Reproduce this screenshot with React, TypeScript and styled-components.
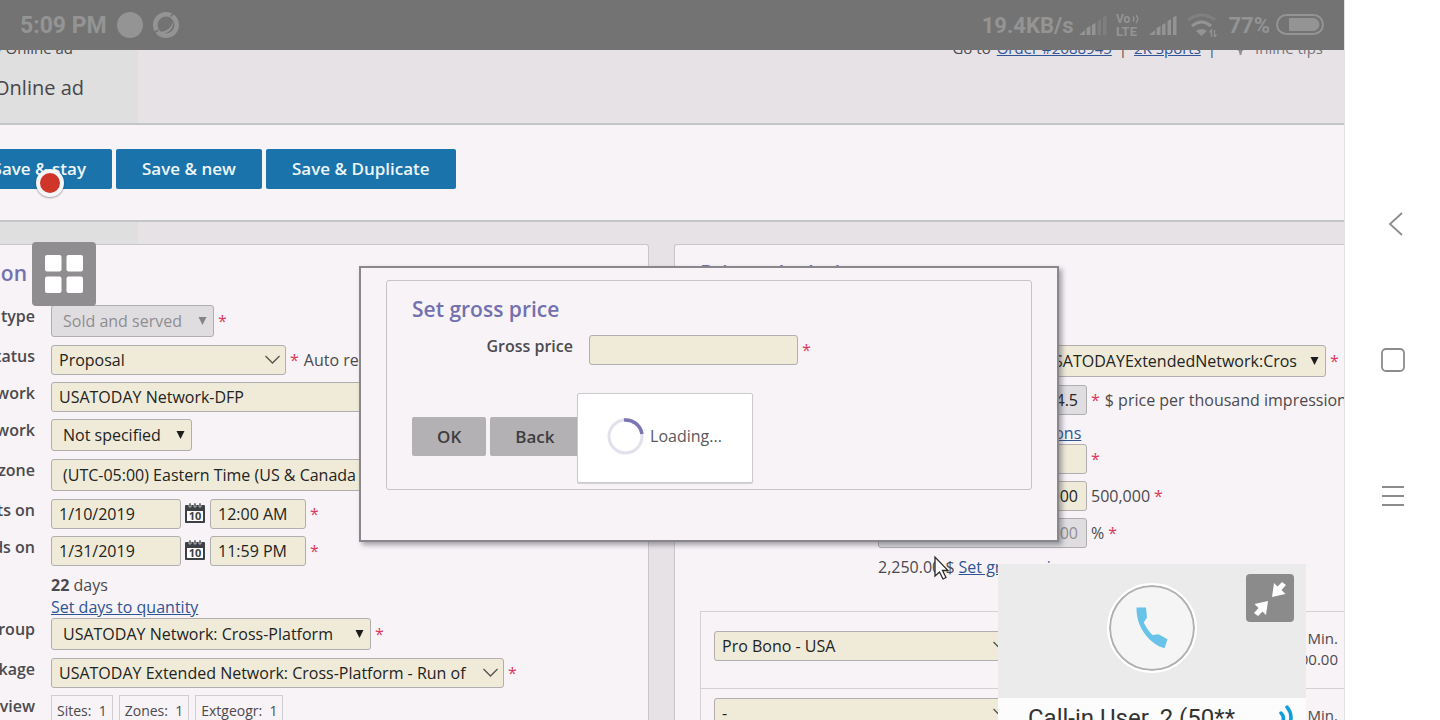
import React from 'react';
import styled, { createGlobalStyle } from 'styled-components';

const Global = createGlobalStyle`
  *, *::before, *::after { box-sizing: border-box; }
  body { margin: 0; background: #fff; font-family: 'Open Sans', 'Noto Sans', sans-serif; font-size: 16px; line-height: 22px; color: #4c4a4e; }
  button, input, select { font: inherit; margin: 0; }
`;

const Device = styled.div`
  display: flex;
  height: 100vh;
  overflow: hidden;
`;

const Shared = styled.div`
  position: relative;
  flex: 1;
  min-width: 0;
  overflow: hidden;
  background: #e7e2e6;
  white-space: nowrap;
`;

/* phone status bar */
const StatusBar = styled.div`
  position: absolute;
  inset: 0 0 auto 0;
  z-index: 5;
  height: 50px;
  padding: 0 20px;
  display: flex;
  align-items: center;
  justify-content: space-between;
  background: #737373;
  color: #949494;
  font: 700 22px/32px Roboto, sans-serif;
`;

const StatusGroup = styled.div<{ $gap: number }>`
  display: flex;
  align-items: center;
  gap: ${p => p.$gap}px;
  svg { display: block; }
  span { padding-top: 2px; }
`;

const Clock = styled.span`
  font-size: 23px;
`;

/* page header */
const Header = styled.header`
  display: flex;
  justify-content: space-between;
  align-items: flex-start;
  height: 125px;
  padding-top: 37px;
  border-bottom: 2px solid #c4c5c7;
`;

const HeaderTitle = styled.div`
  width: 138px;
  height: 86px;
  background: #dedfde;
`;

const Crumb = styled.div`
  display: flex;
  justify-content: flex-end;
  width: 73px;
  font-size: 15px;
`;

const PageTitle = styled.h1`
  display: flex;
  justify-content: flex-end;
  width: 84px;
  margin: 15px 0 0;
  font-size: 20px;
  font-weight: 400;
  line-height: 28px;
  color: #48464a;
`;

const HeaderLinks = styled.nav`
  display: flex;
  gap: 6px;
  padding-right: 21px;
  font-size: 15px;
`;

const Divider = styled.span`
  padding: 0 1px;
`;

const Tips = styled.span`
  display: flex;
  align-items: center;
  gap: 10px;
  margin-left: 13px;
  color: #77757a;
`;

const Link = styled.a`
  color: #2f5596;
  text-decoration: underline;
`;

const Toolbar = styled.div`
  display: flex;
  align-items: flex-start;
  gap: 4px;
  height: 97px;
  padding-top: 24px;
  background: #f7f3f7;
  border-bottom: 2px solid #c4c5c7;
`;

const ActionButton = styled.button`
  height: 40px;
  padding: 0 26px;
  border: 0;
  border-radius: 2px;
  background: #1a74ab;
  color: #eef6fb;
  font-size: 17px;
  font-weight: 600;
`;

const StayClip = styled.div`
  display: flex;
  justify-content: flex-end;
  width: 112px;
`;

const Strip = styled.div`
  width: 138px;
  height: 22px;
  background: #dedfde;
`;

/* form panels */
const Columns = styled.main`
  display: grid;
  grid-template-columns: minmax(0, 649px) minmax(0, 1fr);
  column-gap: 25px;
`;

const Panel = styled.section<{ $side: 'left' | 'right' }>`
  min-height: 500px;
  padding: 16px 0 0 ${p => (p.$side === 'right' ? 25 : 0)}px;
  overflow: hidden;
  background: #f7f3f7;
  border-top: 1px solid #c8c7ca;
  border-left: ${p => (p.$side === 'right' ? '1px solid #c8c7ca' : '0')};
  border-right: ${p => (p.$side === 'left' ? '1px solid #c8c7ca' : '0')};
  border-radius: ${p => (p.$side === 'right' ? '3px 0 0 0' : '0 3px 0 0')};
`;

const Heading = styled.h2<{ $clip?: boolean }>`
  display: flex;
  justify-content: ${p => (p.$clip ? 'flex-end' : 'flex-start')};
  width: ${p => (p.$clip ? '27px' : 'auto')};
  margin: 0;
  font-size: 21px;
  font-weight: 600;
  line-height: 24px;
  color: #7371ae;
`;

const Rows = styled.div`
  display: flex;
  flex-direction: column;
  gap: 8px;
  padding-top: 20px;
`;

const RightRows = styled(Rows)`
  padding-top: 60px;
`;

const Row = styled.div<{ $label: number; $text?: boolean }>`
  display: grid;
  grid-template-columns: ${p => p.$label}px minmax(0, 1fr);
  column-gap: 16px;
  padding-top: ${p => (p.$text ? 1 : 0)}px;
`;

const Label = styled.label`
  display: flex;
  justify-content: flex-end;
  font-weight: 600;
`;

const Fields = styled.div`
  display: flex;
  align-items: center;
  gap: 4px;
`;

const Stack = styled.div`
  display: flex;
  flex-direction: column;
  align-items: flex-start;
  > span, > a { line-height: 22px; }
`;

const Star = styled.span`
  padding-right: 1px;
  color: #e0375a;
`;

const Box = styled.input<{ $w: number; $off?: boolean; $right?: boolean }>`
  width: ${p => p.$w}px;
  height: 30px;
  margin-bottom: -1px;
  padding: 0 8px 0 7px;
  border: 1px solid #b1aeaf;
  border-radius: 3px;
  background: ${p => (p.$off ? '#dfdde0' : '#efebd8')};
  color: ${p => (p.disabled ? '#8f8d90' : '#232323')};
  text-align: ${p => (p.$right ? 'right' : 'left')};
`;

const PickWrap = styled.span<{ $w: number }>`
  display: grid;
  align-items: center;
  flex: none;
  width: ${p => p.$w}px;
  > * { grid-area: 1 / 1; }
  > svg { justify-self: end; margin-right: 6px; pointer-events: none; }
`;

const Pick = styled.select<{ $tall: boolean; $end?: boolean }>`
  appearance: none;
  width: 100%;
  height: ${p => (p.$tall ? 32 : 30)}px;
  margin-bottom: ${p => (p.$tall ? 0 : -1)}px;
  padding: 0 28px 0 ${p => (p.$tall ? 11 : 7)}px;
  border: 1px solid #b1aeaf;
  border-radius: 3px;
  background: ${p => (p.disabled ? '#dfdde0' : '#efebd8')};
  color: ${p => (p.disabled ? '#8f8d90' : '#232323')};
  opacity: 1;
  text-align-last: ${p => (p.$end ? 'right' : 'left')};
`;

function Chevron() {
  return (
    <svg width="15" height="9" viewBox="0 0 15 9" fill="none" stroke="#55534f" strokeWidth="1.3">
      <path d="M.5 1l7 7 7-7" />
    </svg>
  );
}

function Triangle({ color = '#1c1c1c' }: { color?: string }) {
  return (
    <svg width="10" height="8" viewBox="0 0 10 8" fill={color}>
      <path d="M.5 0h8l-4 8z" />
    </svg>
  );
}

type SelectProps = { id?: string; w: number; text: string; tall?: boolean; disabled?: boolean; end?: boolean; name?: string };

function Select({ id, w, text, tall = false, disabled, end, name }: SelectProps) {
  return (
    <PickWrap $w={w}>
      <Pick id={id} aria-label={name} $tall={tall} $end={end} disabled={disabled}>
        <option>{text}</option>
      </Pick>
      {tall ? <Triangle color={disabled ? '#858386' : undefined} /> : <Chevron />}
    </PickWrap>
  );
}

const IconButton = styled.button`
  display: block;
  width: 21px;
  height: 22px;
  padding: 0;
  border: 0;
  background: none;
  svg { display: block; }
`;

function CalendarButton({ name }: { name: string }) {
  return (
    <IconButton aria-label={name}>
      <svg width="20" height="21" viewBox="0 0 20 21">
        <path d="M1 2h18a1 1 0 0 1 1 1v16a1 1 0 0 1-1 1H1a1 1 0 0 1-1-1V3a1 1 0 0 1 1-1z" fill="#3d4145" />
        <path d="M2 8h16v10H2z" fill="#fff" />
        <path d="M4 0h2v4H4zM9 0h2v4H9zM14 0h2v4h-2z" fill="#3d4145" stroke="#f7f3f7" strokeWidth=".6" />
        <text x="10" y="17" textAnchor="middle" fontFamily="Open Sans" fontWeight="700" fontSize="11" fill="#3d4145">10</text>
      </svg>
    </IconButton>
  );
}

const Chips = styled.div`
  display: flex;
  gap: 6px;
`;

const Chip = styled.span`
  height: 34px;
  padding: 4px 5px;
  border: 1px solid #cfced2;
  font-size: 14px;
  white-space: pre;
`;

const Rates = styled.table`
  width: 100%;
  margin-top: 33px;
  border-collapse: collapse;
  border: 1px solid #d3d1d5;
  border-right: 0;
  font-size: 15px;
  line-height: 21px;
  tr { height: 77px; border-top: 1px solid #d3d1d5; }
  td { vertical-align: top; padding: 16px 6px 0 0; text-align: right; }
`;

const RateCell = styled.th<{ $top: number }>`
  padding: ${p => p.$top}px 0 0 13px;
  vertical-align: top;
  text-align: left;
  font-size: 16px;
  font-weight: 400;
`;

/* price dialog */
const Dialog = styled.div`
  position: absolute;
  top: 266px;
  left: 359px;
  z-index: 2;
  width: 700px;
  padding: 12px 25px 50px;
  border: 2px solid #89878b;
  background: #f7f3f7;
  box-shadow: 3px 3px 5px rgba(60, 60, 70, 0.45);
`;

const Group = styled.div`
  height: 210px;
  padding: 16px 25px;
  border: 1px solid #c5c4c8;
  border-radius: 3px;
`;

const DialogRow = styled(Row)`
  padding-top: 14px;
`;

const DialogButtons = styled.div`
  display: flex;
  gap: 4px;
  padding-top: 53px;
`;

const GreyButton = styled(ActionButton)`
  height: 39px;
  padding: 0 25px;
  background: #b3b1b3;
  color: #3f3d40;
`;

const Loading = styled.div`
  position: absolute;
  top: 393px;
  left: 577px;
  z-index: 3;
  display: flex;
  align-items: center;
  justify-content: center;
  gap: 6px;
  width: 176px;
  height: 90px;
  padding: 0 1px 4px 0;
  border: 1px solid #cbcace;
  border-radius: 2px;
  background: #fff;
  box-shadow: 0 1px 1px rgba(0, 0, 0, 0.15);
  color: #5a585c;
`;

/* floating meeting controls */
const RecordDot = styled.span`
  position: absolute;
  top: 169px;
  left: 36px;
  z-index: 2;
  width: 28px;
  height: 28px;
  border: 4px solid #f4f6f8;
  border-radius: 50%;
  background: #cf3529;
  box-shadow: 0 1px 2px rgba(0, 0, 0, 0.35);
`;

const GridButton = styled.button`
  position: absolute;
  top: 242px;
  left: 32px;
  z-index: 2;
  display: grid;
  place-content: center;
  width: 64px;
  height: 64px;
  padding: 0;
  border: 0;
  border-radius: 4px;
  background: #8f8d90;
`;

const Pointer = styled.svg`
  position: absolute;
  top: 555px;
  left: 933px;
  z-index: 3;
`;

const CallCard = styled.aside`
  position: absolute;
  top: 564px;
  right: 38px;
  z-index: 4;
  width: 308px;
  background: #fcfcfc;
`;

const CallView = styled.div`
  display: flex;
  justify-content: center;
  height: 134px;
  padding-top: 19px;
  background: #ebebeb;
`;

const Avatar = styled.div`
  display: grid;
  place-content: center;
  width: 90px;
  height: 90px;
  border: 2px solid #fff;
  border-radius: 50%;
  background: #f5f5f5;
  box-shadow: inset 0 0 0 2px #b0b0b0;
`;

const ShrinkButton = styled.button`
  position: absolute;
  top: 10px;
  right: 12px;
  width: 48px;
  height: 48px;
  padding: 0;
  border: 0;
  border-radius: 4px;
  background: #8b8b8b;
`;

const Caller = styled.div`
  display: flex;
  align-items: flex-start;
  justify-content: space-between;
  height: 46px;
  padding: 5px 10px 0 30px;
  color: #333;
  font: 400 24px/30px Roboto, sans-serif;
`;

/* phone navigation rail */
const Rail = styled.nav`
  display: flex;
  flex-direction: column;
  align-items: center;
  gap: 108px;
  width: 96px;
  padding-top: 210px;
  border-left: 1px solid #e2e2e2;
  background: #fff;
`;

const RailButton = styled.button`
  display: grid;
  place-content: center;
  width: 28px;
  height: 28px;
  padding: 0;
  border: 0;
  background: none;
`;

function Bars({ dim }: { dim?: boolean }) {
  return (
    <svg width="28" height="20" viewBox="0 0 28 20" fill="#949494">
      <path d="M0 20l6-5v5z" />
      <path d="M7.500 13l4-2v9h-4z" />
      <path d="M13 10l3.500-2v12H13z" />
      <path d="M18.500 6l3.500-2v16h-3.500z" fill={dim ? '#7f7f7f' : undefined} />
      <path d="M24 2.500L27.500.5V20H24z" fill={dim ? '#7f7f7f' : undefined} />
    </svg>
  );
}

function Status() {
  return (
    <StatusBar>
      <StatusGroup $gap={10}>
        <Clock>5:09 PM</Clock>
        <svg width="26" height="26" viewBox="0 0 26 26" fill="#949494"><circle cx="13" cy="13" r="13" /></svg>
        <svg width="26" height="26" viewBox="0 0 26 26" fill="none">
          <circle cx="13" cy="13" r="10.700" stroke="#949494" strokeWidth="4.600" />
          <path d="M20 6C21 13 15 20 6 20C13 24 22 18 20 6z" fill="#949494" />
          <path d="M17.500 4.500l3-3M1.500 20.500l4-2.500" stroke="#737373" strokeWidth="1.500" />
        </svg>
      </StatusGroup>
      <StatusGroup $gap={6}>
        <span>19.4KB/s</span>
        <Bars dim />
        <svg width="30" height="24" viewBox="0 0 30 24" fill="#949494" fontFamily="Roboto" fontWeight="700">
          <text x="3" y="10" fontSize="12">Vo</text>
          <path d="M20 3.500q2 2.500 0 5M23 2q3.500 4 0 8" fill="none" stroke="#949494" strokeWidth="1.300" />
          <text x="3" y="23" fontSize="13">LTE</text>
        </svg>
        <Bars />
        <svg width="39" height="24" viewBox="0 0 39 24" fill="none" strokeWidth="3">
          <path d="M5 7q14-10 27 0" stroke="#808080" />
          <path d="M9 13q9.500-8 19 0" stroke="#949494" />
          <path d="M13 18q5.500-4 11 0l-5.500 5z" fill="#949494" />
          <path d="M28.500 24v-7l-2 2.500M31.500 17v7l2-2.500" stroke="#949494" strokeWidth="1.300" />
        </svg>
        <span>77%</span>
        <svg width="48" height="22" viewBox="0 0 48 22">
          <rect x="1" y="1" width="46" height="19" rx="9.500" fill="none" stroke="#949494" strokeWidth="2" />
          <path d="M14 4h23a6.500 6.500 0 0 1 0 13H14q-1 0-1-1V5q0-1 1-1z" fill="#949494" />
        </svg>
      </StatusGroup>
    </StatusBar>
  );
}

function LeftPanel() {
  return (
    <Panel $side="left">
      <Heading $clip>Position</Heading>
      <Rows>
        <Row $label={35}>
          <Label htmlFor="type">Position type</Label>
          <Fields><Select id="type" w={163} text="Sold and served" tall disabled /><Star>*</Star></Fields>
        </Row>
        <Row $label={35}>
          <Label htmlFor="status">Status</Label>
          <Fields><Select id="status" w={235} text="Proposal" /><Star>*</Star><span>Auto reserve</span></Fields>
        </Row>
        <Row $label={35}>
          <Label htmlFor="network">Network</Label>
          <Fields><Select id="network" w={450} text="USATODAY Network-DFP" /></Fields>
        </Row>
        <Row $label={35}>
          <Label htmlFor="subnetwork">Subnetwork</Label>
          <Fields><Select id="subnetwork" w={141} text="Not specified" tall /></Fields>
        </Row>
        <Row $label={35}>
          <Label htmlFor="zone">Time zone</Label>
          <Fields><Select id="zone" w={360} text="(UTC-05:00) Eastern Time (US & Canada" tall /></Fields>
        </Row>
        <Row $label={35}>
          <Label htmlFor="starts">Starts on</Label>
          <Fields>
            <Box id="starts" $w={130} defaultValue="1/10/2019" />
            <CalendarButton name="Pick start date" />
            <Box aria-label="Start time" $w={96} defaultValue="12:00 AM" />
            <Star>*</Star>
          </Fields>
        </Row>
        <Row $label={35}>
          <Label htmlFor="ends">Ends on</Label>
          <Fields>
            <Box id="ends" $w={130} defaultValue="1/31/2019" />
            <CalendarButton name="Pick end date" />
            <Box aria-label="End time" $w={96} defaultValue="11:59 PM" />
            <Star>*</Star>
          </Fields>
        </Row>
        <Row $label={35} $text>
          <span />
          <Stack><span><b>22</b> days</span></Stack>
          <span />
          <Stack><Link href="#quantity">Set days to quantity</Link></Stack>
          <Label htmlFor="group">Group</Label>
          <Fields><Select id="group" w={320} text="USATODAY Network: Cross-Platform" tall /><Star>*</Star></Fields>
        </Row>
        <Row $label={35}>
          <Label htmlFor="package">Package</Label>
          <Fields><Select id="package" w={453} text="USATODAY Extended Network: Cross-Platform - Run of" /><Star>*</Star></Fields>
        </Row>
        <Row $label={35}>
          <Label as="span">Preview</Label>
          <Chips><Chip>{'Sites:  1'}</Chip><Chip>{'Zones:  1'}</Chip><Chip>{'Extgeogr:  1'}</Chip></Chips>
        </Row>
      </Rows>
    </Panel>
  );
}

function RightPanel() {
  return (
    <Panel $side="right">
      <Heading>Price calculation</Heading>
      <RightRows>
        <Row $label={162}>
          <span />
          <Fields><Select name="Rate card" w={448} text="USATODAYExtendedNetwork:Cros" tall end /><Star>*</Star><span>- Rate</span></Fields>
        </Row>
        <Row $label={162}>
          <span />
          <Fields><Box aria-label="Price" $w={209} $right $off defaultValue="4.5" /><Star>*</Star><span>$ price per thousand impressions</span></Fields>
        </Row>
        <Row $label={162}>
          <span />
          <Fields><Link href="#impressions">Calculate from impressions</Link></Fields>
          <span />
          <Fields><Box aria-label="Impressions" $w={209} $right /><Star>*</Star></Fields>
        </Row>
        <Row $label={162}>
          <span />
          <Fields><Box aria-label="Quantity" $w={209} $right defaultValue="500,000" /><span>500,000</span><Star>*</Star></Fields>
        </Row>
        <Row $label={162}>
          <span />
          <Fields><Box aria-label="Discount" $w={209} $right $off disabled defaultValue="0.0000" /><span>%</span><Star>*</Star></Fields>
        </Row>
        <Row $label={162} $text>
          <span />
          <Fields><span>2,250.00 $</span><Link href="#gross">Set gross price</Link></Fields>
        </Row>
      </RightRows>
      <Rates>
        <tbody>
          <tr>
            <RateCell scope="row" $top={19}><Select name="Discount type" w={300} text="Pro Bono - USA" /></RateCell>
            <td>Min.<br />100.00</td>
          </tr>
          <tr>
            <RateCell scope="row" $top={9}><Select name="Second discount type" w={300} text="-" /></RateCell>
            <td>Min.</td>
          </tr>
        </tbody>
      </Rates>
    </Panel>
  );
}

export default function App() {
  return (
    <Device>
      <Global />
      <Shared>
        <Status />
        <Header>
          <HeaderTitle>
            <Crumb>New Online ad</Crumb>
            <PageTitle>Online ad</PageTitle>
          </HeaderTitle>
          <HeaderLinks>
            <span>Go to</span>
            <Link href="#order">Order #2688945</Link>
            <Divider>|</Divider>
            <Link href="#client">2K Sports</Link>
            <Divider>|</Divider>
            <Tips>
              <svg width="9" height="14" viewBox="0 0 9 14" fill="none" stroke="#77757a" strokeWidth="1.300">
                <path d="M2.500 9C0 6 .5 1 4.500 1S9 6 6.500 9zM3 11h3M3.500 13h2" />
              </svg>
              Inline tips
            </Tips>
          </HeaderLinks>
        </Header>
        <Toolbar>
          <StayClip><ActionButton>Save &amp; stay</ActionButton></StayClip>
          <ActionButton>Save &amp; new</ActionButton>
          <ActionButton>Save &amp; Duplicate</ActionButton>
        </Toolbar>
        <Strip />
        <Columns>
          <LeftPanel />
          <RightPanel />
        </Columns>

        <Dialog role="dialog" aria-label="Set gross price">
          <Group>
            <Heading>Set gross price</Heading>
            <DialogRow $label={161}>
              <Label htmlFor="gross">Gross price</Label>
              <Fields><Box id="gross" $w={209} /><Star>*</Star></Fields>
            </DialogRow>
            <DialogButtons>
              <GreyButton>OK</GreyButton>
              <GreyButton>Back</GreyButton>
            </DialogButtons>
          </Group>
        </Dialog>
        <Loading role="status">
          <svg width="37" height="37" viewBox="0 0 37 37" fill="none" strokeWidth="3.500">
            <circle cx="18.500" cy="18.500" r="16.500" stroke="#e2e1ec" strokeWidth="3" />
            <path d="M17 2A16.500 16.500 0 0 1 35 16" stroke="#7a75b3" />
          </svg>
          Loading...
        </Loading>
        <Pointer width="18" height="26" viewBox="0 0 18 26">
          <path d="M2 2v19l4.500-4 3.500 7 3-1.500-3.500-7H15z" fill="#fff" stroke="#2b2b2b" strokeWidth="1.300" />
        </Pointer>
        <RecordDot />
        <GridButton aria-label="Views">
          <svg width="38" height="38" viewBox="0 0 38 38" fill="#fff">
            <rect width="16.500" height="16.500" rx="2" /><rect x="21.500" width="16.500" height="16.500" rx="2" />
            <rect y="21.500" width="16.500" height="16.500" rx="2" /><rect x="21.500" y="21.500" width="16.500" height="16.500" rx="2" />
          </svg>
        </GridButton>
        <CallCard>
          <CallView>
            <Avatar>
              <svg width="32" height="42" viewBox="0 0 32 42" fill="#67c3e8">
                <path d="M.5.500h9.500l1 10-3.300 5q4 8 8.800 12.500l6-.700 9 5-3 9C14 37 0 21 .5.500z" />
              </svg>
            </Avatar>
          </CallView>
          <ShrinkButton aria-label="Shrink">
            <svg width="48" height="48" viewBox="0 0 48 48" fill="#fff">
              <path d="M26 23l2-14 3.500 3.500L36 8l4 3-4.500 5 4 4z" />
              <path d="M22 27l-2 14-3.500-3.500L12 42l-4-3 4.500-5-4-4z" />
            </svg>
          </ShrinkButton>
          <Caller>
            <span>Call-in User_2 (50**</span>
            <svg width="20" height="28" viewBox="0 0 20 28" fill="none" stroke="#0f9fd8" strokeWidth="3.500" strokeLinecap="round">
              <path d="M5 10q5 5 0 11M11 4q8 10 0 21" />
            </svg>
          </Caller>
        </CallCard>
      </Shared>
      <Rail aria-label="Phone navigation">
        <RailButton aria-label="Back">
          <svg width="28" height="28" viewBox="0 0 28 28" fill="none" stroke="#8c8c8c" strokeWidth="1.800"><path d="M23 3L11 14l12 11" /></svg>
        </RailButton>
        <RailButton aria-label="Home">
          <svg width="24" height="24" viewBox="0 0 24 24" fill="none" stroke="#8c8c8c" strokeWidth="1.800"><rect x="1" y="1" width="22" height="22" rx="4" /></svg>
        </RailButton>
        <RailButton aria-label="Recent apps">
          <svg width="22" height="20" viewBox="0 0 22 20" fill="none" stroke="#8c8c8c" strokeWidth="1.800"><path d="M0 1h22M0 10h22M0 19h22" /></svg>
        </RailButton>
      </Rail>
    </Device>
  );
}
